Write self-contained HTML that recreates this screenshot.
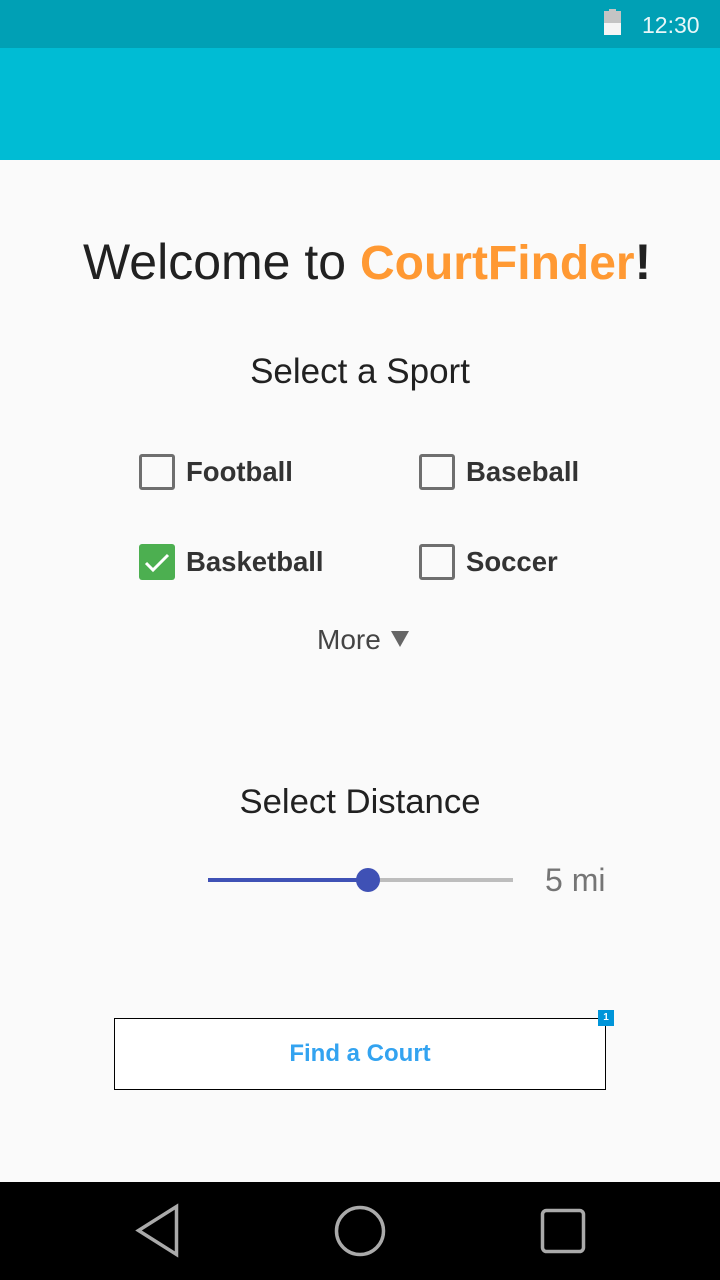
<!DOCTYPE html>
<html><head><meta charset="utf-8"><style>
*{margin:0;padding:0;box-sizing:border-box}
body{width:720px;height:1280px;background:#fafafa;font-family:"Liberation Sans",sans-serif;position:relative;overflow:hidden}
.a{position:absolute}
.cb{position:absolute;width:36px;height:36px;border:3px solid #6f6f6f;border-radius:3px}
.lb{position:absolute;font-weight:bold;font-size:27.5px;color:#333;line-height:36px}
</style></head><body>
<div class="a" style="left:0;top:0;width:720px;height:48px;background:#00a0b5"></div>
<div class="a" style="left:0;top:48px;width:720px;height:112px;background:#00bcd4"></div>
<div class="a" style="left:609px;top:9px;width:7px;height:3px;background:#c4c4c4"></div>
<div class="a" style="left:604px;top:11px;width:17px;height:12px;background:#c4c4c4"></div>
<div class="a" style="left:604px;top:23px;width:17px;height:12px;background:#f5f5f5"></div>
<div class="a" style="left:642px;top:10px;font-size:23px;color:#e8f6f8;line-height:30px">12:30</div>

<div class="a" style="left:83px;top:232px;white-space:nowrap;font-size:50px;color:#212121;line-height:60px">Welcome to <span style="color:#ff9933;font-weight:bold;font-size:48px;letter-spacing:0">CourtFinder</span><span style="font-weight:bold">!</span></div>

<div class="a" style="left:0;width:720px;top:352px;text-align:center;font-size:35px;color:#212121;line-height:40px">Select a Sport</div>

<div class="cb" style="left:139px;top:454px"></div><div class="lb" style="left:186px;top:454px">Football</div>
<div class="cb" style="left:419px;top:454px"></div><div class="lb" style="left:466px;top:454px">Baseball</div>
<div class="a" style="left:139px;top:544px;width:36px;height:36px;background:#4caf50;border-radius:3px"><svg width="36" height="36"><path d="M7 19l7 7 15-15" stroke="#fff" stroke-width="3" fill="none"/></svg></div>
<div class="lb" style="left:186px;top:544px">Basketball</div>
<div class="cb" style="left:419px;top:544px"></div><div class="lb" style="left:466px;top:544px">Soccer</div>

<div class="a" style="left:317px;top:624px;font-size:28px;color:#444;line-height:32px">More</div>
<svg class="a" style="left:390px;top:630px" width="20" height="18"><path d="M1 1h18l-9 16z" fill="#666"/></svg>

<div class="a" style="left:0;width:720px;top:782px;text-align:center;font-size:34.7px;color:#212121;line-height:40px">Select Distance</div>
<div class="a" style="left:208px;top:878px;width:160px;height:4px;background:#3f51b5"></div>
<div class="a" style="left:368px;top:878px;width:145px;height:4px;background:#bdbdbd"></div>
<div class="a" style="left:356px;top:868px;width:24px;height:24px;border-radius:50%;background:#3f51b5"></div>
<div class="a" style="left:545px;top:862px;font-size:32px;color:#757575;line-height:36px">5 mi</div>

<div class="a" style="left:114px;top:1018px;width:492px;height:72px;border:1px solid #000;background:#fff;text-align:center;line-height:70px;font-weight:bold;font-size:24px;color:#33a3f0">Find a Court</div>
<div class="a" style="left:598px;top:1010px;width:16px;height:16px;background:#0095d9;color:#fff;font-size:10px;font-weight:bold;text-align:center;line-height:16px">1</div>

<div class="a" style="left:0;top:1182px;width:720px;height:98px;background:#000"></div>
<svg class="a" style="left:0;top:1182px" width="720" height="98">
<path d="M176.5 24.5v48l-38-24z" stroke="#aaa" stroke-width="3.5" fill="none" stroke-linejoin="miter"/>
<circle cx="360" cy="49" r="23.5" stroke="#aaa" stroke-width="3.5" fill="none"/>
<rect x="542.5" y="28.5" width="41" height="41" rx="4" stroke="#aaa" stroke-width="3.5" fill="none"/>
</svg>
</body></html>
